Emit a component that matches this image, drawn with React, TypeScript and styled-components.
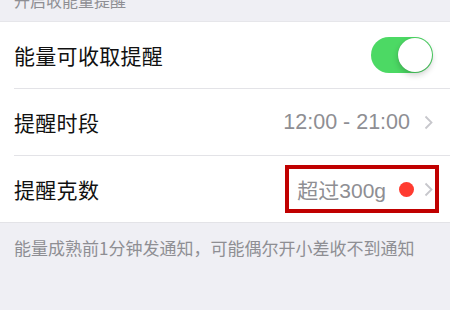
import React from "react";
import styled, { createGlobalStyle } from "styled-components";

const GlobalStyle = createGlobalStyle`
  html, body {
    margin: 0;
    padding: 0;
    background: #efeff4;
  }
  body {
    font-family: "Noto Sans CJK SC", "Liberation Sans", sans-serif;
    overflow: hidden;
  }
`;

const Page = styled.div`
  width: 450px;
  height: 310px;
  background: #efeff4;
  display: flex;
  flex-direction: column;
`;

const SectionHeader = styled.div`
  height: 21px;
  padding-left: 14px;
  font-size: 16px;
  line-height: 16px;
  color: #8e8e93;
  display: flex;
  align-items: flex-end;
  overflow: hidden;
  span {
    transform: translateY(-13px);
  }
`;

const List = styled.div`
  background: #fff;
  border-top: 1px solid #e6e6ea;
  border-bottom: 1px solid #e3e3e7;
`;

const Row = styled.div<{ $last?: boolean }>`
  height: 66px;
  margin-left: 14px;
  padding-right: 17px;
  display: flex;
  align-items: center;
  justify-content: space-between;
  border-bottom: ${(p) => (p.$last ? "none" : "1px solid #e3e3e7")};
`;

const Label = styled.div`
  font-size: 21px;
  color: #111;
  letter-spacing: 0.3px;
`;

const Value = styled.div`
  display: flex;
  align-items: center;
  font-family: "Liberation Sans", "Noto Sans CJK SC", sans-serif;
  font-size: 21.5px;
  color: #8e8e93;
`;

const Highlight = styled.div`
  display: flex;
  align-items: center;
  height: 40px;
  padding: 0 2px 0 8px;
  margin-right: -6px;
  border: 4px solid #c00000;
  font-family: "Liberation Sans", "Noto Sans CJK SC", sans-serif;
  font-size: 21px;
  color: #8e8e93;
`;

const Dot = styled.span`
  width: 15px;
  height: 15px;
  border-radius: 50%;
  background: #ff3b30;
  margin-left: 13px;
`;

const Switch = styled.div<{ $on: boolean }>`
  width: 62px;
  height: 36px;
  border-radius: 18px;
  background: ${(p) => (p.$on ? "#4cd964" : "#e5e5ea")};
  position: relative;
`;

const Knob = styled.span`
  position: absolute;
  top: 1px;
  right: 1px;
  width: 34px;
  height: 34px;
  border-radius: 50%;
  background: #fff;
  box-shadow: 0 3px 6px rgba(0, 0, 0, 0.2), 0 0 1px rgba(0, 0, 0, 0.2);
`;

const Footer = styled.div`
  padding: 14px 14px 0;
  font-size: 17px;
  line-height: 22px;
  color: #8e8e93;
  white-space: nowrap;
`;

const Chevron = ({ gap = 14 }: { gap?: number }) => (
  <svg width="9" height="15" viewBox="0 0 9 15" style={{ marginLeft: gap }}>
    <path
      d="M1.5 1.5 L7.5 7.5 L1.5 13.5"
      fill="none"
      stroke="#c7c7cc"
      strokeWidth="1.8"
    />
  </svg>
);

export default function App() {
  return (
    <Page>
      <GlobalStyle />
      <SectionHeader>
        <span>开启收能量提醒</span>
      </SectionHeader>
      <List>
        <Row>
          <Label>能量可收取提醒</Label>
          <Switch $on>
            <Knob />
          </Switch>
        </Row>
        <Row>
          <Label>提醒时段</Label>
          <Value>
            12:00 - 21:00
            <Chevron />
          </Value>
        </Row>
        <Row $last>
          <Label>提醒克数</Label>
          <Highlight>
            超过300g
            <Dot />
            <Chevron gap={10} />
          </Highlight>
        </Row>
      </List>
      <Footer>能量成熟前1分钟发通知，可能偶尔开小差收不到通知</Footer>
    </Page>
  );
}
